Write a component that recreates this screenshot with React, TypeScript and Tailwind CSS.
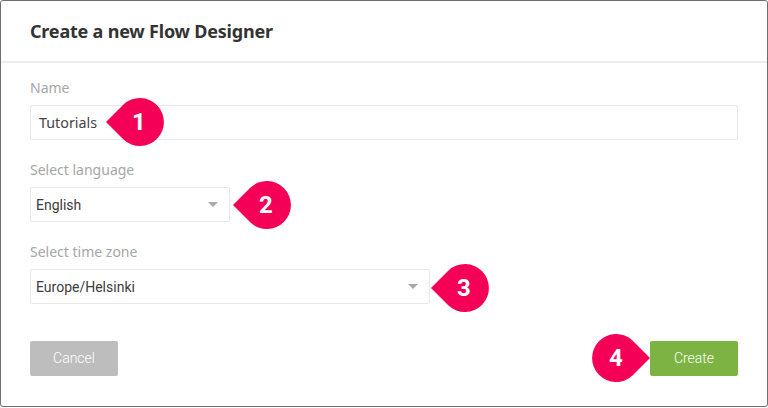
function Callout({ n, flip, className = "" }: { n: number; flip?: boolean; className?: string }) {
  return (
    <div className={`relative -my-[7px] h-[48px] w-[58px] shrink-0 ${className}`}>
      <svg width="58" height="48" viewBox="0 0 58 48" className={flip ? "block -scale-x-100" : "block"}>
        <path d="M0 24 L17.5 6.5 A24 24 0 1 1 17.5 41.5 Z" fill="#f50057" />
      </svg>
      <span
        className={`absolute top-0 flex h-[48px] w-[48px] items-center justify-center font-['Roboto',sans-serif] text-[24px] font-bold text-white ${
          flip ? "left-0" : "left-[9px]"
        }`}
      >
        {n}
      </span>
    </div>
  );
}

function Label({ children }: { children: string }) {
  return <div className="h-[17px] text-[14px] leading-[17px] text-[#a6a6a6]">{children}</div>;
}

function Select({ value, width, n, callout }: { value: string; width: string; n: number; callout: string }) {
  return (
    <div className="flex items-center">
      <div className={`flex h-[35px] items-center justify-between rounded-[2px] border border-[#e8e8e8] bg-white pl-[5px] pr-[11px] pt-[2px] font-['Roboto',sans-serif] text-[14px] text-[#3c3c3c] ${width}`}>
        <span>{value}</span>
        <span className="-mt-[2px] h-0 w-0 border-x-[5px] border-t-[5px] border-x-transparent border-t-[#aaaaaa]" />
      </div>
      <Callout n={n} className={callout} />
    </div>
  );
}

export default function App() {
  return (
    <div className="h-[408px] w-[768px] bg-white font-['Noto_Sans',sans-serif]">
      <div className="h-[407px] w-[768px] rounded-[3px] border border-[#6e6e6e] bg-white">
        <div className="flex h-[62px] items-center border-b-2 border-[#ededed] pl-[29px]">
          <h1 className="text-[18px] font-bold tracking-[-0.2px] text-[#333333]">Create a new Flow Designer</h1>
        </div>
        <div className="flex flex-col gap-[21px] px-[29px] pt-[16px]">
          <div className="flex flex-col gap-[9px]">
            <Label>Name</Label>
            <div className="relative flex h-[35px] w-[708px] items-center rounded-[2px] border border-[#e8e8e8] pl-[8px] text-[14.3px] text-[#444444]">
              Tutorials
              <Callout n={1} className="!absolute left-[75px] top-0 !my-[-8px]" />
            </div>
          </div>
          <div className="flex flex-col gap-[9px]">
            <Label>Select language</Label>
            <Select value="English" width="w-[200px]" n={2} callout="ml-[3px]" />
          </div>
          <div className="flex flex-col gap-[9px]">
            <Label>Select time zone</Label>
            <Select value="Europe/Helsinki" width="w-[400px]" n={3} callout="ml-[1px] translate-y-[1px]" />
          </div>
          <div className="mt-[16px] flex w-[708px] items-center justify-between font-['Roboto',sans-serif] text-[14px] font-light text-white">
            <button className="h-[35px] w-[88px] rounded-[2px] bg-[#bdbdbd]">Cancel</button>
            <div className="flex items-center">
              <Callout n={4} flip className="-translate-y-[1px]" />
              <button className="h-[35px] w-[88px] rounded-[2px] bg-[#7cb342]">Create</button>
            </div>
          </div>
        </div>
      </div>
    </div>
  );
}
